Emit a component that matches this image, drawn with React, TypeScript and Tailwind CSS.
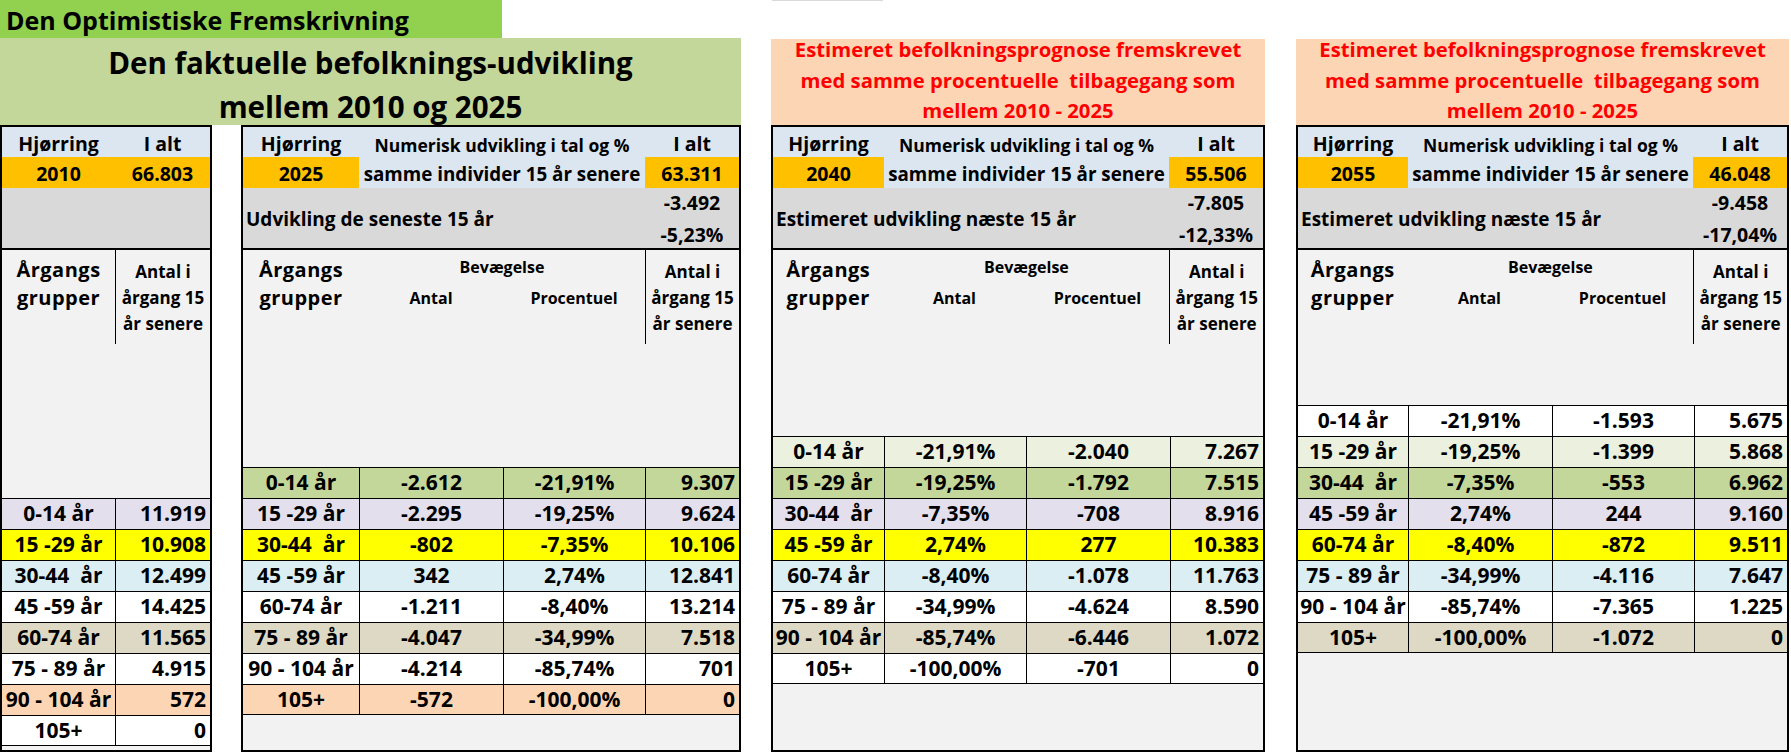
import React from 'react';

const SEQ = [
  'bg-white',
  'bg-[#EBF1DE]',
  'bg-[#C4D79B]',
  'bg-[#E4DFEC]',
  'bg-[#FFFF00]',
  'bg-[#DAEEF3]',
  'bg-white',
  'bg-[#DDD9C4]',
  'bg-white',
  'bg-[#FCD5B4]',
  'bg-white',
];

const LABELS = ['0-14 år', '15 -29 år', '30-44  år', '45 -59 år', '60-74 år', '75 - 89 år', '90 - 104 år', '105+'];

type Tbl = {
  width: string;
  cols: [string, string, string];
  year: string;
  total: string;
  grayLabel: string;
  g1: string;
  g2: string;
  headH: string;
  offset: number;
  rows: [string, string, string][];
};

function Table1() {
  const vals = ['11.919', '10.908', '12.499', '14.425', '11.565', '4.915', '572', '0'];
  return (
    <div className="flex h-[627px] w-[212px] shrink-0 flex-col border-2 border-black bg-[#F2F2F2]">
      <div className="flex h-[30px] shrink-0 bg-[#DCE6F1] text-[19.5px]">
        <div className="flex w-[113px] items-center justify-center pt-[4px]">Hjørring</div>
        <div className="flex flex-1 items-center justify-center pt-[4px]">I alt</div>
      </div>
      <div className="flex h-[31px] shrink-0 bg-[#FFC000] text-[19.5px]">
        <div className="flex w-[113px] items-center justify-center pt-[3px]">2010</div>
        <div className="flex flex-1 items-center justify-center pt-[3px]">66.803</div>
      </div>
      <div className="h-[62px] shrink-0 border-b-2 border-black bg-[#D9D9D9]" />
      <div className="flex h-[248px] shrink-0">
        <div className="flex w-[113px] flex-col items-center pt-[6px] text-[20px] leading-[28px] tracking-[0.5px]">
          <span>Årgangs</span>
          <span>grupper</span>
        </div>
        <div className="flex h-[94px] flex-1 flex-col items-center border-l border-black pt-[9px] text-[17px] leading-[26px]">
          <span>Antal i</span>
          <span>årgang 15</span>
          <span>år senere</span>
        </div>
      </div>
      {LABELS.map((l, i) => (
        <div
          key={l}
          className={`flex h-[31px] shrink-0 border-t border-black text-[21px] ${SEQ[3 + i]} ${i === 7 ? 'border-b' : ''}`}
        >
          <div className="flex w-[113px] items-center justify-center whitespace-pre">{l}</div>
          <div className="flex flex-1 items-center justify-end border-l border-black pr-[4px]">{vals[i]}</div>
        </div>
      ))}
      <div className="flex-1" />
    </div>
  );
}

function BigTable({ width, cols, year, total, grayLabel, g1, g2, headH, offset, rows }: Tbl) {
  const [c1, c2, c3] = cols;
  return (
    <div className={`flex h-[627px] shrink-0 flex-col border-2 border-black bg-[#F2F2F2] ${width}`}>
      <div className="flex h-[30px] shrink-0 bg-[#DCE6F1]">
        <div className={`flex items-center justify-center pt-[4px] text-[19.5px] ${c1}`}>Hjørring</div>
        <div className="flex flex-1 items-center justify-center pt-[6px] text-[17.5px]">Numerisk udvikling i tal og %</div>
        <div className="flex w-[94px] items-center justify-center pt-[4px] text-[19.5px]">I alt</div>
      </div>
      <div className="flex h-[31px] shrink-0 bg-[#DCE6F1]">
        <div className={`flex items-center justify-center bg-[#FFC000] pt-[3px] text-[19.5px] ${c1}`}>{year}</div>
        <div className="flex flex-1 items-center justify-center pt-[3px] text-[18.8px]">samme individer 15 år senere</div>
        <div className="flex w-[94px] items-center justify-center bg-[#FFC000] pt-[3px] text-[19.5px]">{total}</div>
      </div>
      <div className="flex h-[62px] shrink-0 border-b-2 border-black bg-[#D9D9D9]">
        <div className="flex flex-1 items-center pl-[3px] pt-[3px] text-[19px]">{grayLabel}</div>
        <div className="flex w-[94px] flex-col items-center justify-center pt-[2px] text-[19.5px] leading-[32px]">
          <span>{g1}</span>
          <span>{g2}</span>
        </div>
      </div>
      <div className={`flex shrink-0 ${headH}`}>
        <div className={`flex flex-col items-center pt-[6px] text-[20px] leading-[28px] tracking-[0.5px] ${c1}`}>
          <span>Årgangs</span>
          <span>grupper</span>
        </div>
        <div className="flex flex-1 flex-col">
          <div className="pt-[5px] text-center text-[16px] leading-[24px]">Bevægelse</div>
          <div className="mt-[5px] flex text-[16px] leading-[28px]">
            <div className={`text-center ${c2}`}>Antal</div>
            <div className={`text-center ${c3}`}>Procentuel</div>
          </div>
        </div>
        <div className="flex h-[94px] w-[94px] flex-col items-center border-l border-black pt-[9px] text-[17px] leading-[26px]">
          <span>Antal i</span>
          <span>årgang 15</span>
          <span>år senere</span>
        </div>
      </div>
      {rows.map((r, i) => (
        <div
          key={i}
          className={`flex h-[31px] shrink-0 border-t border-black text-[21px] ${SEQ[offset + i]} ${i === 7 ? 'border-b' : ''}`}
        >
          <div className={`flex items-center justify-center whitespace-pre ${c1}`}>{LABELS[i]}</div>
          <div className={`flex items-center justify-center border-l border-black ${c2}`}>{r[0]}</div>
          <div className={`flex items-center justify-center border-l border-black ${c3}`}>{r[1]}</div>
          <div className="flex flex-1 items-center justify-end border-l border-black pr-[4px]">{r[2]}</div>
        </div>
      ))}
      <div className="flex-1" />
    </div>
  );
}

const T2: [string, string, string][] = [
  ['-2.612', '-21,91%', '9.307'],
  ['-2.295', '-19,25%', '9.624'],
  ['-802', '-7,35%', '10.106'],
  ['342', '2,74%', '12.841'],
  ['-1.211', '-8,40%', '13.214'],
  ['-4.047', '-34,99%', '7.518'],
  ['-4.214', '-85,74%', '701'],
  ['-572', '-100,00%', '0'],
];

const T3: [string, string, string][] = [
  ['-21,91%', '-2.040', '7.267'],
  ['-19,25%', '-1.792', '7.515'],
  ['-7,35%', '-708', '8.916'],
  ['2,74%', '277', '10.383'],
  ['-8,40%', '-1.078', '11.763'],
  ['-34,99%', '-4.624', '8.590'],
  ['-85,74%', '-6.446', '1.072'],
  ['-100,00%', '-701', '0'],
];

const T4: [string, string, string][] = [
  ['-21,91%', '-1.593', '5.675'],
  ['-19,25%', '-1.399', '5.868'],
  ['-7,35%', '-553', '6.962'],
  ['2,74%', '244', '9.160'],
  ['-8,40%', '-872', '9.511'],
  ['-34,99%', '-4.116', '7.647'],
  ['-85,74%', '-7.365', '1.225'],
  ['-100,00%', '-1.072', '0'],
];

function Salmon({ width }: { width: string }) {
  return (
    <div className={`h-[86px] shrink-0 bg-[#FCD5B4] text-center text-[20.3px] text-[#FF0000] ${width}`}>
      <div className="h-[21px] leading-[21px]">Estimeret befolkningsprognose fremskrevet</div>
      <div className="mt-[5px] whitespace-pre leading-[31px]">med samme procentuelle  tilbagegang som</div>
      <div className="leading-[29px]">mellem 2010 - 2025</div>
    </div>
  );
}

export default function App() {
  return (
    <div className="flex h-[752px] w-[1791px] flex-col overflow-hidden bg-white font-bold text-black font-[family-name:'Open_Sans','Liberation_Sans',sans-serif]">
      <div className="flex h-[38px] shrink-0">
        <div className="h-[38px] w-[502px] bg-[#92D050] pl-[6px] pt-[2px] text-[25px] leading-[36px]">
          Den Optimistiske Fremskrivning
        </div>
        <div className="ml-[270px] h-[1px] w-[111px] bg-[#D9D9D9]" />
      </div>
      <div className="flex h-[87px] shrink-0 items-end">
        <div className="h-[87px] w-[741px] shrink-0 bg-[#C4D79B] pt-[3px] text-center text-[29.5px] leading-[44px]">
          <div>Den faktuelle befolknings-udvikling</div>
          <div>mellem 2010 og 2025</div>
        </div>
        <div className="ml-[30px]">
          <Salmon width="w-[494px]" />
        </div>
        <div className="ml-[31px]">
          <Salmon width="w-[493px]" />
        </div>
      </div>
      <div className="flex shrink-0">
        <Table1 />
        <div className="ml-[29px]">
          <BigTable
            width="w-[500px]"
            cols={['w-[116px]', 'w-[144px]', 'w-[142px]']}
            year="2025"
            total="63.311"
            grayLabel="Udvikling de seneste 15 år"
            g1="-3.492"
            g2="-5,23%"
            headH="h-[217px]"
            offset={2}
            rows={T2}
          />
        </div>
        <div className="ml-[30px]">
          <BigTable
            width="w-[494px]"
            cols={['w-[111px]', 'w-[142px]', 'w-[144px]']}
            year="2040"
            total="55.506"
            grayLabel="Estimeret udvikling næste 15 år"
            g1="-7.805"
            g2="-12,33%"
            headH="h-[186px]"
            offset={1}
            rows={T3}
          />
        </div>
        <div className="ml-[31px]">
          <BigTable
            width="w-[493px]"
            cols={['w-[110px]', 'w-[144px]', 'w-[142px]']}
            year="2055"
            total="46.048"
            grayLabel="Estimeret udvikling næste 15 år"
            g1="-9.458"
            g2="-17,04%"
            headH="h-[155px]"
            offset={0}
            rows={T4}
          />
        </div>
      </div>
    </div>
  );
}
